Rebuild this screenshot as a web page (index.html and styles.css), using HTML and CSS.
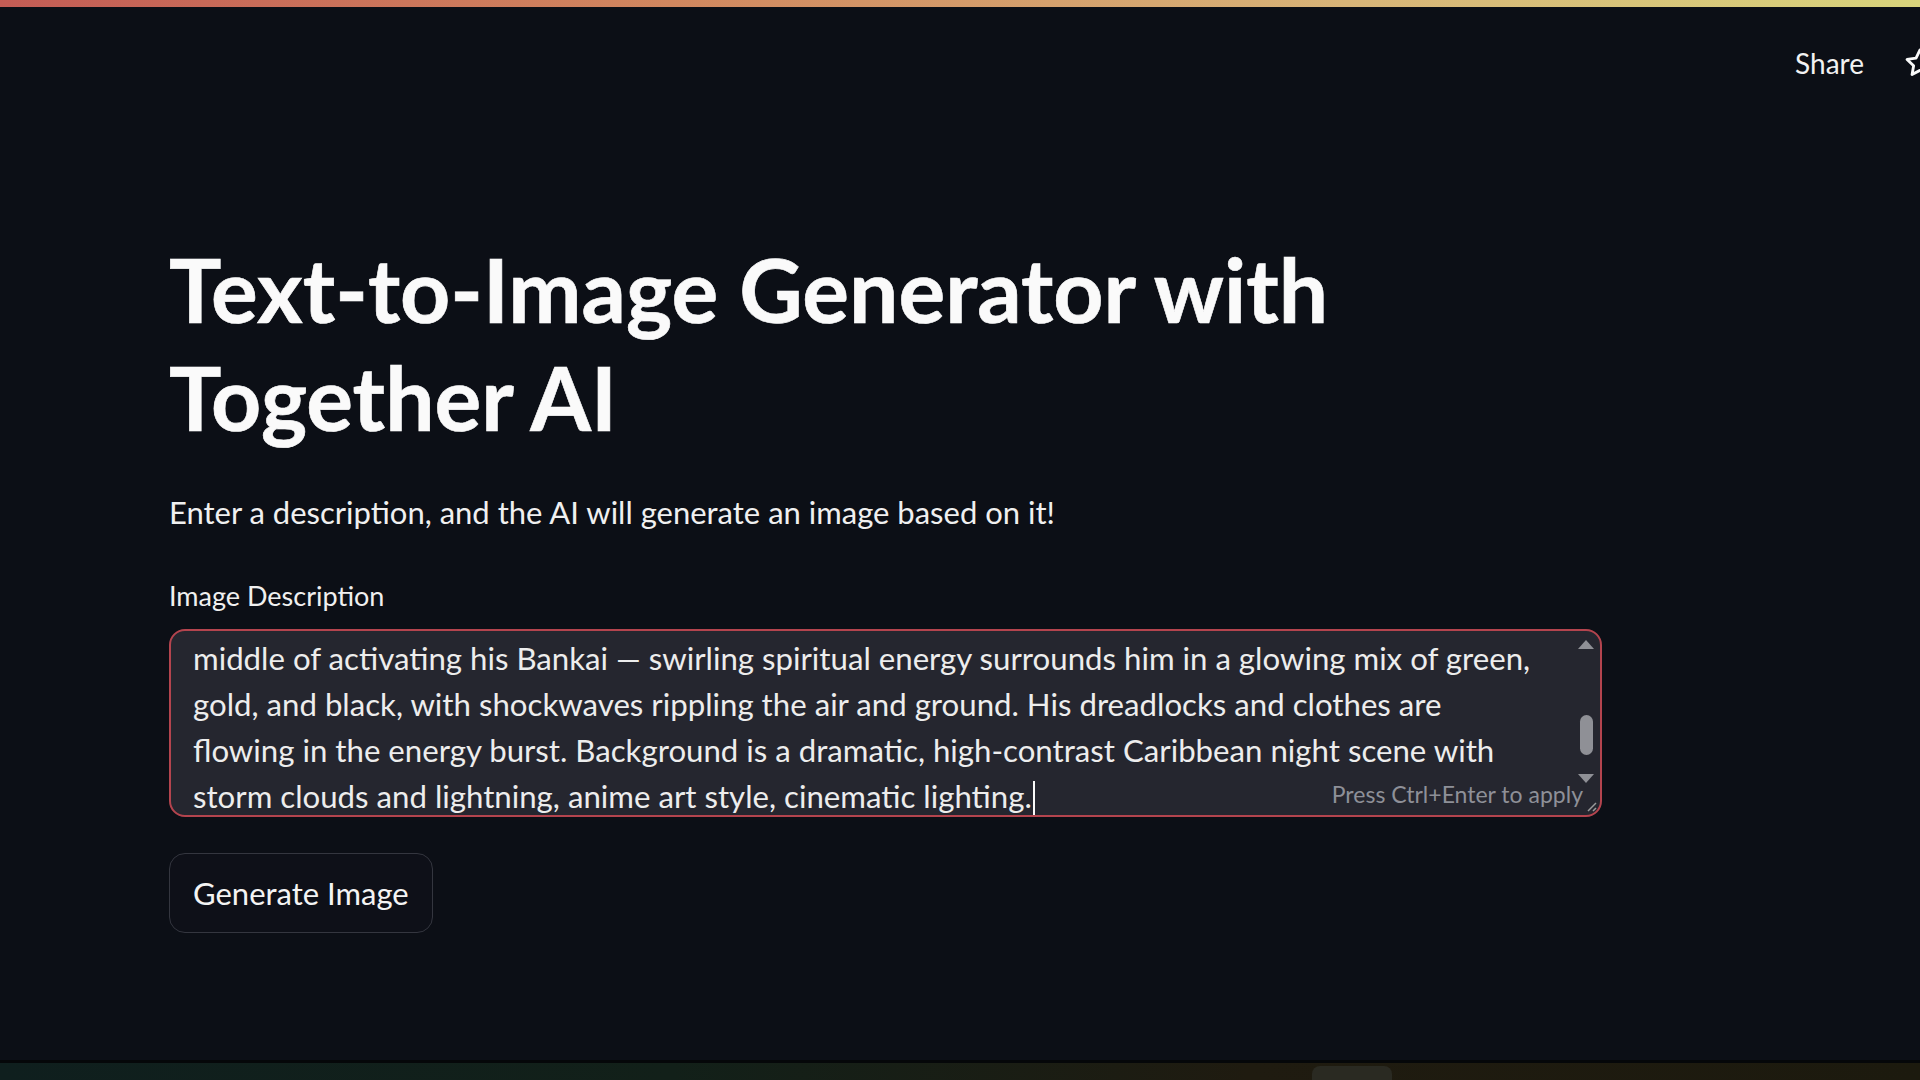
FILE: index.html
```html
<!DOCTYPE html>
<html lang="en">
<head>
<meta charset="utf-8">
<title>Text-to-Image Generator with Together AI</title>
<link rel="stylesheet" href="styles.css">
</head>
<body>
<div class="topbar"></div>
<header class="header">
  <span class="share">Share</span>
  <svg class="star" viewBox="0 0 24 24" width="34" height="34"><path d="M12 2.8l2.8 5.8 6.3.9-4.6 4.4 1.1 6.3L12 17.2l-5.6 3 1.1-6.3L2.9 9.5l6.3-.9z" fill="none" stroke="#fafafa" stroke-width="2" stroke-linejoin="round"/></svg>
</header>
<main class="main">
  <h1 class="title">Text-to-Image Generator with<br>Together AI</h1>
  <p class="subtitle">Enter a description, and the AI will generate an image based on it!</p>
  <div class="label">Image Description</div>
  <div class="textarea">
    <div class="ta-text">
      <div class="ta-line">middle of activating his Bankai — swirling spiritual energy surrounds him in a glowing mix of green,</div>
      <div class="ta-line">gold, and black, with shockwaves rippling the air and ground. His dreadlocks and clothes are</div>
      <div class="ta-line">flowing in the energy burst. Background is a dramatic, high-contrast Caribbean night scene with</div>
      <div class="ta-line">storm clouds and lightning, anime art style, cinematic lighting.<span class="caret"></span></div>
    </div>
    <div class="scrollbar">
      <span class="arrow-up"></span>
      <span class="thumb"></span>
      <span class="arrow-down"></span>
    </div>
    <span class="hint">Press Ctrl+Enter to apply</span>
    <svg class="resize" viewBox="0 0 14 14" width="14" height="14"><path d="M13 5L5 13M13 10L10 13" stroke="#9a9a9a" stroke-width="1.5"/></svg>
  </div>
  <button class="btn">Generate Image</button>
</main>
<div class="bottom-strip"><span class="tab"></span></div>
</body>
</html>
```

FILE: styles.css
```css
html, body {
  margin: 0;
  padding: 0;
}
body {
  background: #0c0f16;
  color: #fafafa;
  font-family: "Lato", "Liberation Sans", sans-serif;
  height: 100vh;
  display: flex;
  flex-direction: column;
  overflow: hidden;
}
.topbar {
  height: 7px;
  flex: none;
  background: linear-gradient(90deg, #c45c55 0%, #d1875f 35%, #d8b478 70%, #d9d47c 100%);
}
.header {
  flex: none;
  height: 112px;
  display: flex;
  align-items: center;
  justify-content: flex-end;
  gap: 39px;
  margin-right: -17px;
}
.share {
  font-size: 28px;
  color: #f2f2f2;
}
.star {
  display: block;
}
.main {
  flex: 1;
  padding: 117px 0 0 169px;
  width: 1433px;
}
.title {
  margin: 0;
  font-size: 87.5px;
  line-height: 108px;
  font-weight: 700;
  color: #fafafa;
  -webkit-text-stroke: 0.6px #fafafa;
}
.subtitle {
  margin: 35px 0 0;
  font-size: 31px;
  line-height: 51px;
  color: #f0f0f0;
}
.label {
  margin-top: 35px;
  font-size: 27px;
  line-height: 45px;
  color: #f0f0f0;
}
.textarea {
  position: relative;
  margin-top: 11px;
  height: 184px;
  border: 2px solid #b4444e;
  border-radius: 16px;
  background: #25262f;
  overflow: hidden;
}
.ta-text {
  padding: 4px 0 0 22px;
}
.ta-line {
  font-size: 31.2px;
  line-height: 46px;
  white-space: nowrap;
  color: #ededed;
}
.caret {
  display: inline-block;
  width: 2px;
  height: 34px;
  background: #fafafa;
  vertical-align: -7px;
  margin-left: 1px;
}
.scrollbar {
  position: absolute;
  right: 6px;
  top: 9px;
  width: 16px;
  display: flex;
  flex-direction: column;
  align-items: center;
}
.arrow-up {
  width: 0;
  height: 0;
  border-left: 8px solid transparent;
  border-right: 8px solid transparent;
  border-bottom: 9px solid #8f9096;
}
.thumb {
  margin-top: 66px;
  width: 13px;
  height: 40px;
  border-radius: 7px;
  background: #8f9096;
}
.arrow-down {
  margin-top: 19px;
  width: 0;
  height: 0;
  border-left: 8px solid transparent;
  border-right: 8px solid transparent;
  border-top: 9px solid #8f9096;
}
.hint {
  position: absolute;
  right: 17px;
  bottom: 6px;
  font-size: 23px;
  line-height: 30px;
  color: #8e9098;
}
.resize {
  position: absolute;
  right: 3px;
  bottom: 3px;
}
.btn {
  display: block;
  margin-top: 36px;
  height: 80px;
  padding: 0 23px;
  background: #0e1018;
  border: 1.5px solid #34363f;
  border-radius: 16px;
  color: #f4f4f4;
  font-family: "Lato", "Liberation Sans", sans-serif;
  font-size: 31px;
}
.bottom-strip {
  flex: none;
  height: 17px;
  border-top: 3px solid #050709;
  background: linear-gradient(90deg, #0f1f1e 0%, #122019 35%, #1f1b10 65%, #1c1a0e 100%);
  position: relative;
}
.tab {
  position: absolute;
  left: 1312px;
  top: 3px;
  width: 80px;
  height: 20px;
  border-radius: 8px 8px 0 0;
  background: #2a2a22;
}
```
